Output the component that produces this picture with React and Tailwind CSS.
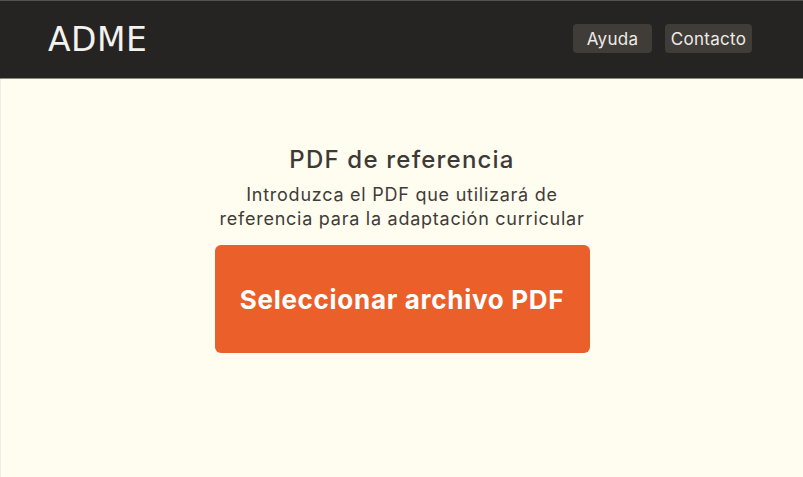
export default function App() {
  return (
    <div className="min-h-[477px] w-full flex flex-col bg-[#fffcf0] font-['Inter',sans-serif] border-l border-[#f2ece8]">
      <header className="h-[79px] bg-[#252422] border-t border-[#55524e] border-b border-b-[#8a8780] flex items-center justify-between pl-[48px] pr-[51px] -ml-px">
        <span className="font-['DejaVu_Sans',sans-serif] text-[33px] leading-none text-[#f4f2ee] tracking-[0.5px]">ADME</span>
        <nav className="flex items-center gap-[13px] -mt-[3px]">
          <button className="h-[29px] w-[79px] pt-[3px] rounded-[4px] bg-[#403d39] text-[17px] leading-none tracking-[0.3px] text-[#eeebe6]">Ayuda</button>
          <button className="h-[29px] w-[87px] pt-[3px] rounded-[4px] bg-[#403d39] text-[17px] leading-none tracking-[0.3px] text-[#eeebe6]">Contacto</button>
        </nav>
      </header>
      <main className="flex flex-col items-center pt-[66px] text-[#3d3a36]">
        <h1 className="text-[24px] font-medium leading-[30px] tracking-[1.2px]">PDF de referencia</h1>
        <p className="mt-[8px] text-[18px] leading-[24px] text-center text-[#3f3c38] tracking-[0.75px] w-[380px]">
          Introduzca el PDF que utilizará de referencia para la adaptación curricular
        </p>
        <button className="mt-[14px] w-[375px] h-[108px] rounded-[6px] bg-[#eb5f2a] text-white text-[26px] font-bold tracking-[0.7px]">
          Seleccionar archivo PDF
        </button>
      </main>
    </div>
  );
}
